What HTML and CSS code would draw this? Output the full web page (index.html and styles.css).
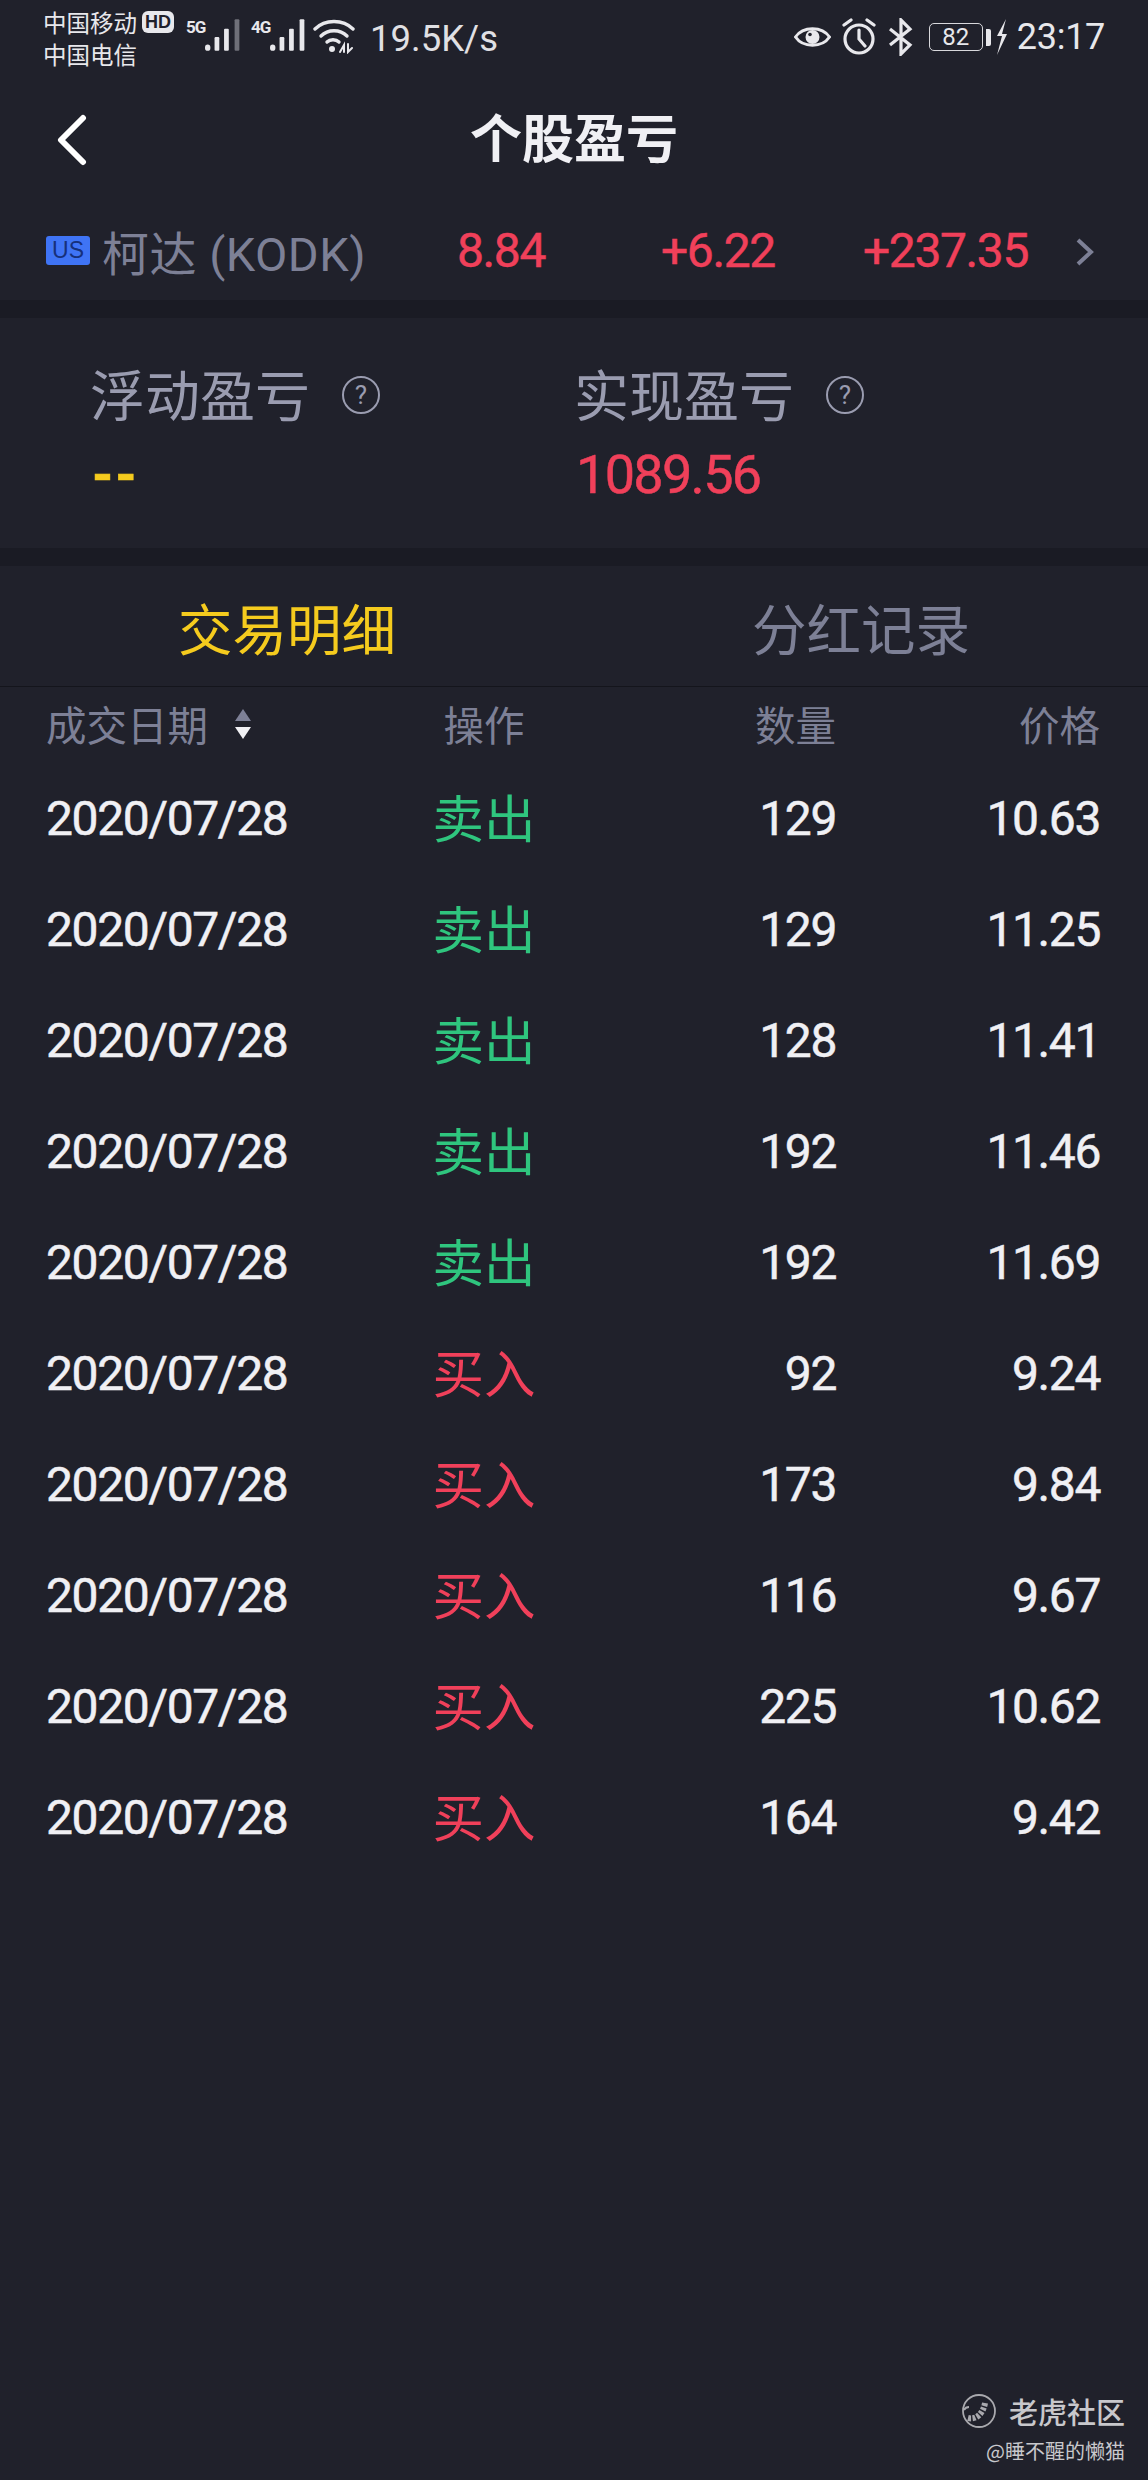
FILE: index.html
```html
<!DOCTYPE html>
<html lang="zh-CN">
<head>
<meta charset="utf-8">
<title>个股盈亏</title>
<link rel="stylesheet" href="styles.css">
</head>
<body>
<div class="page">
  <header class="status">
    <div class="carriers"><span>中国移动</span><span>中国电信</span></div>
    <span class="hd">HD</span>
    <div class="signal"><span class="net">5G</span>
      <svg class="bars" width="38" height="36" viewBox="0 0 36 32"><g fill="#e8e8ec"><rect x="1" y="25" width="5" height="6" rx="2.5"/><rect x="10" y="18" width="4.500" height="13" rx="1"/><rect x="19" y="10" width="4.500" height="21" rx="1"/></g><rect x="29" y="1" width="4.500" height="30" rx="1" fill="#6f7079"/></svg>
    </div>
    <div class="signal sig2"><span class="net">4G</span>
      <svg class="bars" width="38" height="36" viewBox="0 0 36 32"><g fill="#e8e8ec"><rect x="1" y="25" width="5" height="6" rx="2.5"/><rect x="10" y="18" width="4.500" height="13" rx="1"/><rect x="19" y="10" width="4.500" height="21" rx="1"/><rect x="29" y="1" width="4.500" height="30" rx="1"/></g></svg>
    </div>
    <svg class="wifi" width="42" height="36" viewBox="0 0 42 36" fill="none" stroke="#e8e8ec" stroke-width="3.4" stroke-linecap="round"><path d="M2 11C12 1 30 1 40 11"/><path d="M8 18C15 11 27 11 34 18"/><path d="M14 24C17 21 23 21 26 24"/><circle cx="19" cy="31" r="3" fill="#e8e8ec" stroke="none"/><path d="M27 34l4-7v7M35 26v8l4-4" stroke-width="2"/></svg>
    <span class="speed">19.5K/s</span>
    <div class="status-right">
      <svg width="37" height="28" viewBox="0 0 37 28" fill="none" stroke="#e8e8ec" stroke-width="3"><path d="M1.5 14C9 3 28 3 35.5 14C28 25 9 25 1.5 14Z"/><circle cx="18.500" cy="14" r="7" fill="#e8e8ec" stroke="none"/><circle cx="16" cy="11.500" r="1.800" fill="#20212b" stroke="none"/></svg>
      <svg width="36" height="38" viewBox="0 0 36 38" fill="none" stroke="#e8e8ec" stroke-width="3.200" stroke-linecap="round"><circle cx="18" cy="21" r="14"/><path d="M18 12v9l6 7M3 7l7-5M33 7l-7-5"/></svg>
      <svg width="28" height="38" viewBox="0 0 28 38" fill="none" stroke="#e8e8ec" stroke-width="3.200"><path d="M3 11l20 16-9 9V2l9 9L3 27"/></svg>
      <div class="battery"><span class="level">82</span></div>
      <span class="nub"></span>
      <svg class="bolt" width="14" height="36" viewBox="0 0 14 36"><path d="M11 0L2 17h5l-5 19 10-21H7z" fill="#e8e8ec"/></svg>
      <span class="clock">23:17</span>
    </div>
  </header>

  <nav class="nav">
    <svg class="back" width="36" height="52" viewBox="0 0 36 52" fill="none" stroke="#fff" stroke-width="6" stroke-linecap="round" stroke-linejoin="round"><path d="M29 4L7 26l22 22"/></svg>
    <h1 class="title">个股盈亏</h1>
  </nav>

  <section class="stock">
    <div class="stock-name"><span class="flag">US</span><span>柯达 (KODK)</span></div>
    <span class="num red s-price">8.84</span>
    <span class="num red s-change">+6.22</span>
    <span class="num red s-total">+237.35</span>
    <svg class="more" width="20" height="30" viewBox="0 0 20 30" fill="none" stroke="#7d8096" stroke-width="4"><path d="M3 3l13 12L3 27"/></svg>
  </section>

  <section class="summary">
    <div class="sum-col">
      <div class="sum-label"><span>浮动盈亏</span><span class="help">?</span></div>
      <div class="sum-value yellow dash">--</div>
    </div>
    <div class="sum-col">
      <div class="sum-label"><span>实现盈亏</span><span class="help">?</span></div>
      <div class="sum-value red">1089.56</div>
    </div>
  </section>

  <section class="detail">
    <div class="tabs"><span class="tab active">交易明细</span><span class="tab">分红记录</span></div>
    <div class="row head">
      <span class="date-head">成交日期<svg width="18" height="32" viewBox="0 0 18 32"><path d="M9 1l8 12H1z" fill="#7d8096"/><path d="M9 31l8-12H1z" fill="#f0f0f4"/></svg></span>
      <span class="op">操作</span><span class="end">数量</span><span class="end">价格</span>
    </div>
    <div class="row"><span class="num">2020/07/28</span><span class="op green">卖出</span><span class="num end">129</span><span class="num end">10.63</span></div>
    <div class="row"><span class="num">2020/07/28</span><span class="op green">卖出</span><span class="num end">129</span><span class="num end">11.25</span></div>
    <div class="row"><span class="num">2020/07/28</span><span class="op green">卖出</span><span class="num end">128</span><span class="num end">11.41</span></div>
    <div class="row"><span class="num">2020/07/28</span><span class="op green">卖出</span><span class="num end">192</span><span class="num end">11.46</span></div>
    <div class="row"><span class="num">2020/07/28</span><span class="op green">卖出</span><span class="num end">192</span><span class="num end">11.69</span></div>
    <div class="row"><span class="num">2020/07/28</span><span class="op red">买入</span><span class="num end">92</span><span class="num end">9.24</span></div>
    <div class="row"><span class="num">2020/07/28</span><span class="op red">买入</span><span class="num end">173</span><span class="num end">9.84</span></div>
    <div class="row"><span class="num">2020/07/28</span><span class="op red">买入</span><span class="num end">116</span><span class="num end">9.67</span></div>
    <div class="row"><span class="num">2020/07/28</span><span class="op red">买入</span><span class="num end">225</span><span class="num end">10.62</span></div>
    <div class="row"><span class="num">2020/07/28</span><span class="op red">买入</span><span class="num end">164</span><span class="num end">9.42</span></div>
  </section>

  <aside class="mark">
    <div class="mark-top">
      <svg width="36" height="36" viewBox="0 0 36 36" fill="none" stroke="#a9a9ae" stroke-width="1.800"><circle cx="18" cy="18" r="16"/><path d="M7 25c8 2 15-4 17-15" stroke-width="6" stroke-dasharray="3 1.500"/><path d="M3 17c1-2 3-3 5-3"/></svg>
      <span>老虎社区</span>
    </div>
    <div class="mark-user">@睡不醒的懒猫</div>
  </aside>
</div>
</body>
</html>
```

FILE: styles.css
```css
* { box-sizing: border-box; }
html, body { margin: 0; padding: 0; }
body {
  background: #20212b;
  color: #f0f0f4;
  font-family: "Noto Sans CJK SC", "Noto Sans", sans-serif;
}
.page { position: relative; width: 1148px; height: 2480px; overflow: hidden; background: #20212b; }
.red { color: #f0405a; }
.green { color: #2fc57e; }
.yellow { color: #f5cb1e; }

.num {
  font-family: "Roboto", "Noto Sans CJK SC", sans-serif;
  font-size: 48px;
  font-weight: 400;
  letter-spacing: -1.4px;
  -webkit-text-stroke: 0.5px currentColor;
}

/* status bar */
.status { display: flex; align-items: flex-start; height: 78px; padding: 6px 43px 0; color: #e8e8ec; }
.carriers { display: flex; flex-direction: column; width: 99px; font-size: 23.500px; line-height: 32px; }
.hd {
  width: 32px; height: 22px; margin-top: 5px; border-radius: 6px; background: #e8e8ec; color: #20212b;
  font: 700 18px/22px "Liberation Sans", sans-serif; text-align: center;
}
.signal { display: flex; align-items: flex-start; margin: 11px 0 0 12px; }
.sig2 { margin-left: 9px; }
.net { font: 700 17px/20px "Roboto", sans-serif; width: 18px; letter-spacing: -1px; }
.wifi { margin: 12px 0 0 6px; }
.speed { margin: 10px 0 0 15px; font: 400 36.500px/46px "Roboto", sans-serif; color: #e0e0e4; }
.status-right { display: flex; align-items: center; gap: 10px; height: 46px; margin: 8px 0 0 auto; }
.battery {
  display: flex; align-items: center; justify-content: center; width: 54px; height: 28px; margin-left: 4px;
  border: 1.5px solid #d8d8dc; border-radius: 5px;
}
.level { font: 400 24px/26px "Roboto", sans-serif; }
.nub { width: 5px; height: 17px; margin-left: -7px; border-radius: 0 2px 2px 0; background: #e8e8ec; }
.bolt { margin-left: -6px; }
.clock { margin-left: -2px; font: 400 36px/46px "Roboto", sans-serif; letter-spacing: -0.3px; }

/* nav */
.nav { display: flex; align-items: center; justify-content: center; position: relative; height: 122px; }
.back { position: absolute; left: 54px; top: 36px; }
.title { margin: 0 0 6px; font-size: 52px; font-weight: 700; line-height: 70px; color: #f0f0f4; }

/* stock row */
.stock { display: flex; align-items: center; height: 100px; padding: 0 0 0 46px; }
.stock-name { display: flex; align-items: center; gap: 12px; width: 411px; color: #7d8096; font-family: "Roboto", "Noto Sans CJK SC", sans-serif; font-size: 47px; letter-spacing: 0.5px; }
.flag {
  width: 44px; height: 29px; border-radius: 3px; background: #3f74f5; color: #16307a;
  font: 400 23px/29px "Liberation Sans", sans-serif; text-align: center; letter-spacing: 0;
}
.s-price { width: 204px; }
.s-change { width: 202px; }
.s-total { width: 212px; }
.more { margin-top: 3px; }

/* summary */
.summary { display: flex; height: 248px; padding: 35px 0 0 90px; border-top: 18px solid #1a1b24; }
.sum-col { width: 484px; }
.sum-label { display: flex; align-items: center; gap: 32px; font-size: 55px; line-height: 78px; color: #9a9cb0; }
.help {
  display: flex; align-items: center; justify-content: center; width: 38px; height: 38px; margin-top: 6px;
  border: 2.5px solid #9a9cb0; border-radius: 50%;
  font: 400 26px/1 "Roboto", sans-serif;
}
.sum-value { padding: 6px 0 0 2px; font: 400 54px/76px "Roboto", sans-serif; letter-spacing: -1.7px; -webkit-text-stroke: 0.5px currentColor; }
.dash { font-weight: 700; letter-spacing: 2px; }

/* detail */
.detail { border-top: 18px solid #1a1b24; }
.tabs { display: flex; height: 121px; border-bottom: 1px solid #14151c; }
.tab { flex: 1; display: flex; align-items: center; justify-content: center; font-size: 54.500px; color: #7d8096; }
.tab.active { color: #f5cb1e; }

.row {
  display: grid; grid-template-columns: 318px 240px 232px 264px; align-items: center;
  height: 111px; padding: 0 46px 0 46px; font-size: 51.500px; color: #f0f0f4;
}
.row .op { padding-bottom: 6px; }
.head { height: 76px; font-size: 40.500px; color: #7d8096; }
.head > span { padding-bottom: 3px; }
.head .op { padding-bottom: 3px; }
.date-head { display: flex; align-items: center; gap: 26px; }
.op { text-align: center; }
.end { text-align: right; }

/* watermark over the page */
.mark { position: absolute; right: 23px; top: 2390px; display: flex; flex-direction: column; align-items: flex-end; color: #c8c8cc; }
.mark-top { display: flex; align-items: center; gap: 12px; font-size: 29px; font-weight: 500; line-height: 42px; }
.mark-user { font-size: 20px; line-height: 38px; }
```
